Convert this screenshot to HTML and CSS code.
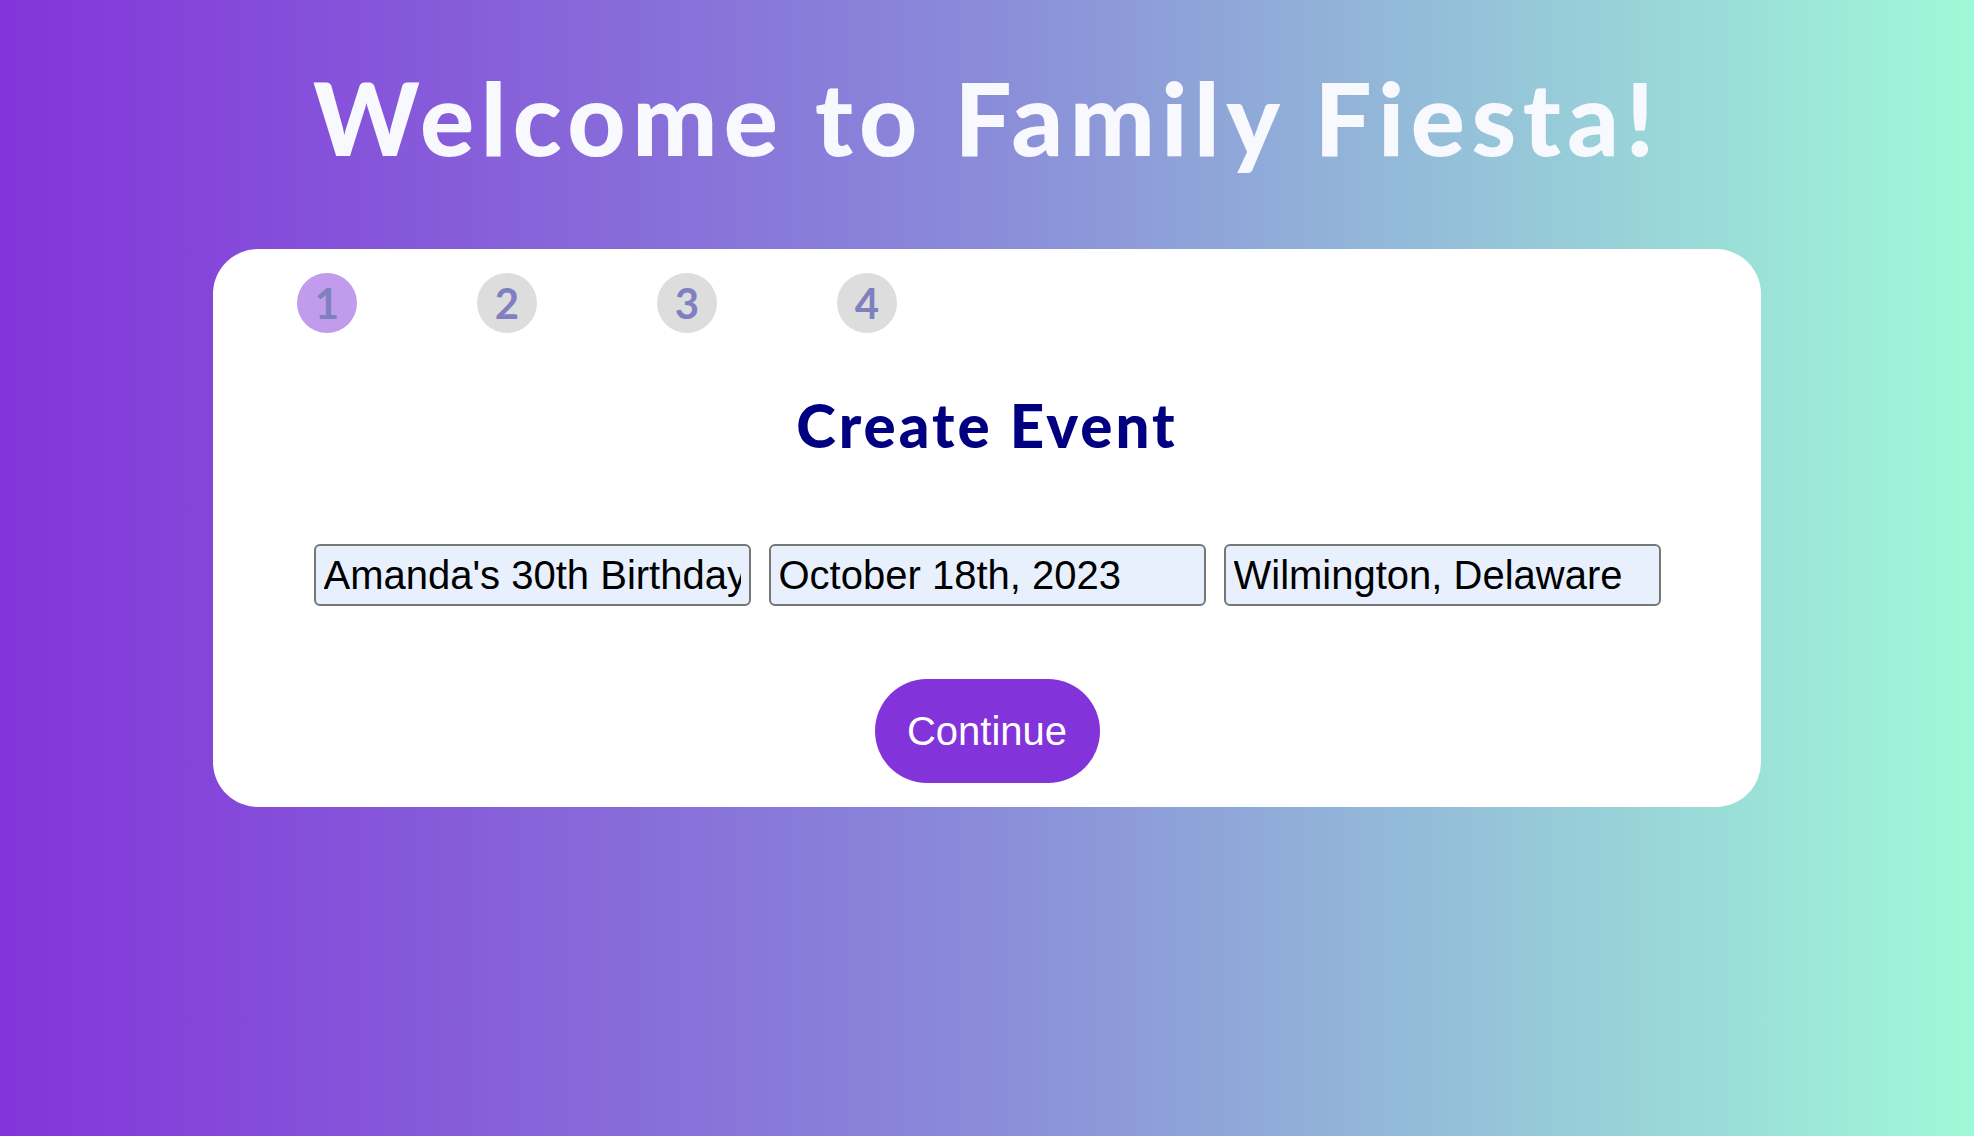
FILE: index.html
```html
<!DOCTYPE html>
<html lang="en">
<head>
<meta charset="utf-8">
<title>Family Fiesta</title>
<link rel="stylesheet" href="styles.css">
</head>
<body>
<h1 class="title">Welcome to Family Fiesta!</h1>
<main class="card">
  <div class="steps">
    <div class="step step-active">1</div>
    <div class="step">2</div>
    <div class="step">3</div>
    <div class="step">4</div>
  </div>
  <h2 class="card-title">Create Event</h2>
  <form class="event-form">
    <div class="fields">
      <input class="field" type="text" value="Amanda's 30th Birthday">
      <input class="field" type="text" value="October 18th, 2023">
      <input class="field" type="text" value="Wilmington, Delaware">
    </div>
    <button class="continue" type="button">Continue</button>
  </form>
</main>
</body>
</html>
```

FILE: styles.css
```css
html, body {
  margin: 0;
  padding: 0;
}

body {
  min-height: 100vh;
  background: linear-gradient(to right, #8334da, #8a8cd9 50%, #a0f9d8);
  padding-top: 67px;
  box-sizing: border-box;
  font-family: "Lato", "Liberation Sans", sans-serif;
}

.title {
  margin: 0;
  text-align: center;
  font-family: "Lato", sans-serif;
  font-weight: 900;
  font-size: 101px;
  letter-spacing: 6.5px;
  line-height: 1;
  color: #f8f8ff;
}

.card {
  width: 1548px;
  margin: 81px auto 0;
  background: #ffffff;
  border-radius: 45px;
  padding: 24px 0 24px;
  box-sizing: border-box;
}

.steps {
  display: flex;
  gap: 120px;
  padding-left: 84px;
}

.step {
  width: 60px;
  height: 60px;
  border-radius: 50%;
  background: #dddddd;
  color: #8080c0;
  font-family: "Lato", sans-serif;
  font-weight: 700;
  font-size: 42px;
  display: flex;
  align-items: center;
  justify-content: center;
}

.step-active {
  background: #c19bec;
}

.card-title {
  margin: 62px 0 0;
  text-align: center;
  font-family: "Lato", sans-serif;
  font-weight: 900;
  font-size: 60px;
  letter-spacing: 3px;
  line-height: 1;
  color: #000080;
}

.event-form {
  display: flex;
  flex-direction: column;
  align-items: center;
}

.fields {
  display: flex;
  gap: 18px;
  margin-top: 89px;
}

.field {
  width: 437px;
  height: 62px;
  box-sizing: border-box;
  padding: 0 8px;
  border: 2px solid #767676;
  border-radius: 6px;
  background: #e8f0fe;
  font-family: "Liberation Sans", Arial, sans-serif;
  font-size: 40px;
  color: #000;
}

.continue {
  margin-top: 73px;
  width: 225px;
  height: 104px;
  border: none;
  border-radius: 52px;
  background: #8233d9;
  color: #ffffff;
  font-family: "Liberation Sans", Arial, sans-serif;
  font-size: 40px;
  padding: 0;
}
```
